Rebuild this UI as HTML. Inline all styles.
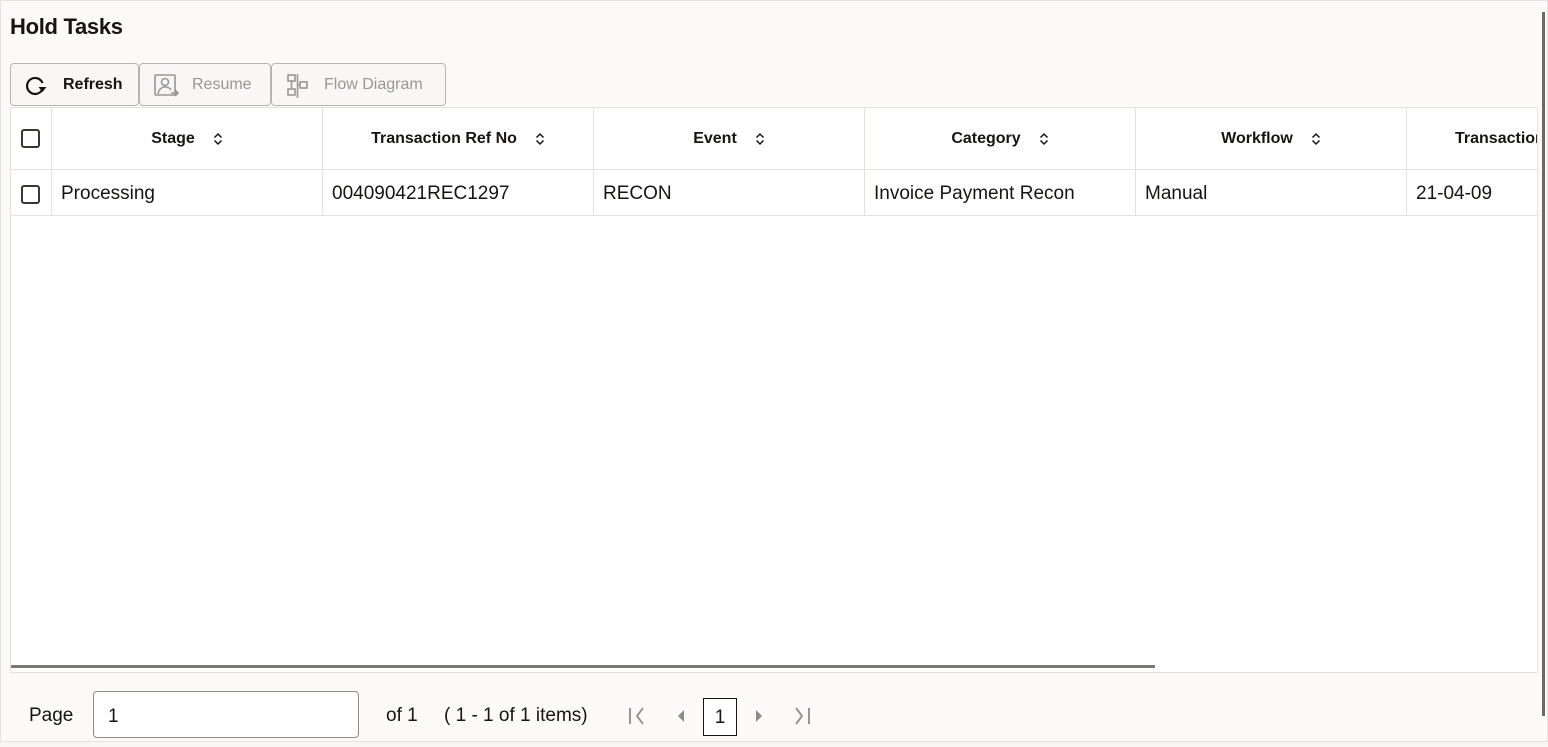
<!DOCTYPE html>
<html><head><style>
*{box-sizing:border-box;margin:0;padding:0}
body{width:1548px;height:747px;background:#f7f6f4;font-family:"Liberation Sans",sans-serif;color:#161513;position:relative;overflow:hidden}
.frame{position:absolute;left:0;top:0;width:1548px;height:742px;border:1px solid #e6e4e1;background:#fbfaf9}
h1{position:absolute;left:10px;top:14px;font-size:22px;font-weight:bold;letter-spacing:-0.3px}
.btn{position:absolute;top:63px;height:43px;border:1px solid #b8b5b0;border-radius:4px;background:#f8f7f5;font-size:16px;font-weight:bold;display:flex;align-items:center}
.dis{color:#9a9794;font-weight:normal}
.tbl{position:absolute;left:10px;top:107px;width:1528px;height:566px;background:#fff;border:1px solid #e4e2df;overflow:hidden}
.cell{position:absolute;border-right:1px solid #e4e2df;font-size:19px;display:flex;align-items:center}
.hd{top:0;height:62px;border-bottom:1px solid #e4e2df;font-size:16px;font-weight:bold;justify-content:center}
.rw{top:62px;height:46px;border-bottom:1px solid #e4e2df;padding-left:9px;padding-top:3px}
.cb{width:19px;height:19px;border:2px solid #3a3835;border-radius:3px;position:absolute;left:10px}
.hd svg{margin-left:18px}
</style></head><body>
<div class="frame"></div>
<h1>Hold Tasks</h1>
<div class="btn" style="left:10px;width:129px">
<svg style="position:absolute;left:13px;top:11px" width="24" height="22" viewBox="0 0 24 22" fill="none" stroke="#161513" stroke-width="2.2"><path d="M18.5 8A8 8 0 1 0 18 15"/><path d="M14.5 12h8l-4 5z" fill="#161513" stroke="none"/></svg>
<span style="position:absolute;left:52px">Refresh</span></div>
<div class="btn dis" style="left:139px;width:132px">
<svg style="position:absolute;left:14px;top:10px" width="26" height="24" viewBox="0 0 26 24" fill="none" stroke="#9a9794" stroke-width="1.6"><rect x="1" y="1" width="20" height="20" rx="1"/><circle cx="11" cy="8" r="3.5"/><path d="M4 20c1-5 4-7 7-7s5 1 6 3"/><path d="M17 19h7M21 16l3 3-3 3"/></svg>
<span style="position:absolute;left:52px">Resume</span></div>
<div class="btn dis" style="left:271px;width:175px">
<svg style="position:absolute;left:15px;top:10px" width="22" height="24" viewBox="0 0 22 24" fill="none" stroke="#9a9794" stroke-width="1.6"><rect x="1" y="1" width="7" height="6"/><rect x="1" y="15" width="7" height="6"/><rect x="13" y="8" width="7" height="6"/><path d="M4.5 7v8M10.5 0v24M10.5 11h2.5"/></svg>
<span style="position:absolute;left:52px">Flow Diagram</span></div>

<div class="tbl">
<div class="cell hd" style="left:0;width:41px"><div class="cb"></div></div>
<div class="cell rw" style="left:0;width:41px"><div class="cb"></div></div>
<div class="cell hd" style="left:41px;width:271px">Stage<svg width="10" height="14" viewBox="0 0 10 14" fill="none" stroke="#161513" stroke-width="1.5"><path d="M1.5 5.5L5 2l3.5 3.5M1.5 8.5L5 12l3.5-3.5"/></svg></div>
<div class="cell hd" style="left:312px;width:271px">Transaction Ref No<svg width="10" height="14" viewBox="0 0 10 14" fill="none" stroke="#161513" stroke-width="1.5"><path d="M1.5 5.5L5 2l3.5 3.5M1.5 8.5L5 12l3.5-3.5"/></svg></div>
<div class="cell hd" style="left:583px;width:271px">Event<svg width="10" height="14" viewBox="0 0 10 14" fill="none" stroke="#161513" stroke-width="1.5"><path d="M1.5 5.5L5 2l3.5 3.5M1.5 8.5L5 12l3.5-3.5"/></svg></div>
<div class="cell hd" style="left:854px;width:271px">Category<svg width="10" height="14" viewBox="0 0 10 14" fill="none" stroke="#161513" stroke-width="1.5"><path d="M1.5 5.5L5 2l3.5 3.5M1.5 8.5L5 12l3.5-3.5"/></svg></div>
<div class="cell hd" style="left:1125px;width:271px">Workflow<svg width="10" height="14" viewBox="0 0 10 14" fill="none" stroke="#161513" stroke-width="1.5"><path d="M1.5 5.5L5 2l3.5 3.5M1.5 8.5L5 12l3.5-3.5"/></svg></div>
<div class="cell hd" style="left:1396px;width:200px;justify-content:flex-start;padding-left:48px">Transaction</div>
<div class="cell rw" style="left:41px;width:271px">Processing</div>
<div class="cell rw" style="left:312px;width:271px">004090421REC1297</div>
<div class="cell rw" style="left:583px;width:271px">RECON</div>
<div class="cell rw" style="left:854px;width:271px">Invoice Payment Recon</div>
<div class="cell rw" style="left:1125px;width:271px">Manual</div>
<div class="cell rw" style="left:1396px;width:200px">21-04-09</div>
<div style="position:absolute;left:0;top:557px;width:1144px;height:3px;background:#7b7874"></div>
</div>
<div style="position:absolute;left:1542px;top:12px;width:3px;height:704px;background:#6e6b67"></div>

<div style="position:absolute;left:29px;top:705px;font-size:19px">Page</div>
<div style="position:absolute;left:93px;top:691px;width:266px;height:47px;border:1px solid #8f8c88;border-radius:4px;background:#fff;font-size:19px;padding:14px 0 0 14px">1</div>
<div style="position:absolute;left:386px;top:705px;font-size:19px">of 1</div>
<div style="position:absolute;left:444px;top:705px;font-size:19px">( 1 - 1 of 1 items)</div>
<svg style="position:absolute;left:628px;top:707px" width="20" height="18" viewBox="0 0 20 18" fill="none" stroke="#8f8c88" stroke-width="1.8"><path d="M2 1v16M15 1l-6 8 6 8"/></svg>
<svg style="position:absolute;left:676px;top:709px" width="10" height="14" viewBox="0 0 10 14"><path d="M8 1v12L2 7z" fill="#8f8c88"/></svg>
<div style="position:absolute;left:703px;top:698px;width:34px;height:38px;border:1px solid #161513;font-size:19px;text-align:center;line-height:38px;background:#fff">1</div>
<svg style="position:absolute;left:754px;top:709px" width="10" height="14" viewBox="0 0 10 14"><path d="M2 1v12L8 7z" fill="#8f8c88"/></svg>
<svg style="position:absolute;left:792px;top:707px" width="20" height="18" viewBox="0 0 20 18" fill="none" stroke="#8f8c88" stroke-width="1.8"><path d="M17 1v16M4 1l6 8-6 8"/></svg>
</body></html>
